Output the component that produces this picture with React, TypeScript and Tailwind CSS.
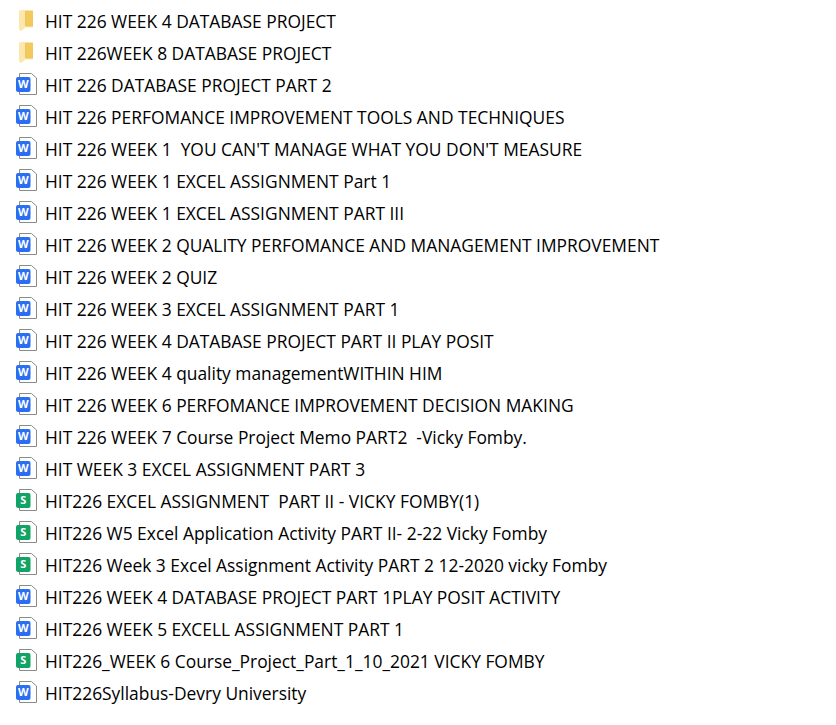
type Kind = "folder" | "word" | "sheet";

const files: { name: string; kind: Kind }[] = [
  { name: "HIT 226 WEEK 4 DATABASE PROJECT", kind: "folder" },
  { name: "HIT 226WEEK 8 DATABASE PROJECT", kind: "folder" },
  { name: "HIT 226 DATABASE PROJECT PART 2", kind: "word" },
  { name: "HIT 226 PERFOMANCE IMPROVEMENT TOOLS AND TECHNIQUES", kind: "word" },
  { name: "HIT 226 WEEK 1  YOU CAN'T MANAGE WHAT YOU DON'T MEASURE", kind: "word" },
  { name: "HIT 226 WEEK 1 EXCEL ASSIGNMENT Part 1", kind: "word" },
  { name: "HIT 226 WEEK 1 EXCEL ASSIGNMENT PART III", kind: "word" },
  { name: "HIT 226 WEEK 2 QUALITY PERFOMANCE AND MANAGEMENT IMPROVEMENT", kind: "word" },
  { name: "HIT 226 WEEK 2 QUIZ", kind: "word" },
  { name: "HIT 226 WEEK 3 EXCEL ASSIGNMENT PART 1", kind: "word" },
  { name: "HIT 226 WEEK 4 DATABASE PROJECT PART II PLAY POSIT", kind: "word" },
  { name: "HIT 226 WEEK 4 quality managementWITHIN HIM", kind: "word" },
  { name: "HIT 226 WEEK 6 PERFOMANCE IMPROVEMENT DECISION MAKING", kind: "word" },
  { name: "HIT 226 WEEK 7 Course Project Memo PART2  -Vicky Fomby.", kind: "word" },
  { name: "HIT WEEK 3 EXCEL ASSIGNMENT PART 3", kind: "word" },
  { name: "HIT226 EXCEL ASSIGNMENT  PART II - VICKY FOMBY(1)", kind: "sheet" },
  { name: "HIT226 W5 Excel Application Activity PART II- 2-22 Vicky Fomby", kind: "sheet" },
  { name: "HIT226 Week 3 Excel Assignment Activity PART 2 12-2020 vicky Fomby", kind: "sheet" },
  { name: "HIT226 WEEK 4 DATABASE PROJECT PART 1PLAY POSIT ACTIVITY", kind: "word" },
  { name: "HIT226 WEEK 5 EXCELL ASSIGNMENT PART 1", kind: "word" },
  { name: "HIT226_WEEK 6 Course_Project_Part_1_10_2021 VICKY FOMBY", kind: "sheet" },
  { name: "HIT226Syllabus-Devry University", kind: "word" },
];

function FolderIcon() {
  return (
    <svg width="22" height="22" viewBox="0 0 22 22" className="shrink-0 mb-[2px]">
      <path d="M5 1.5 H17 V17.5 H5 Z" fill="#f2c95c" />
      <path d="M3 1.5 H9.5 V17 H17 V18.5 H9.5 L5 22 L3 20.5 Z" fill="#fce8ab" />
      <path d="M9.5 2 V17 H17" fill="none" stroke="#e5b94e" strokeWidth="0.6" />
    </svg>
  );
}

function DocIcon({ letter, color }: { letter: string; color: string }) {
  return (
    <svg width="22" height="22" viewBox="0 0 22 22" className="shrink-0 mb-[2px]">
      <path
        d="M3.5 0.5 H15.5 L20.5 5 V21.5 H3.5 Z"
        fill="#fff"
        stroke="#8a8a8a"
        strokeWidth="1"
        strokeLinejoin="round"
      />
      <rect x="0" y="4" width="14.5" height="15" rx="2" fill={color} />
      <text
        x="7.25"
        y="15.4"
        textAnchor="middle"
        fontSize="11"
        fontWeight="700"
        fontFamily="'Open Sans', sans-serif"
        fill="#fff"
      >
        {letter}
      </text>
    </svg>
  );
}

function FileIcon({ kind }: { kind: Kind }) {
  if (kind === "folder") return <FolderIcon />;
  if (kind === "word") return <DocIcon letter="W" color="#2a6fef" />;
  return <DocIcon letter="S" color="#12a366" />;
}

export default function App() {
  return (
    <div className="w-[836px] h-[725px] overflow-hidden bg-white pt-[5px] pl-4 font-['Open_Sans',sans-serif] text-black">
      {files.map((file) => (
        <div key={file.name} className="flex items-center h-8 gap-[7px]">
          <FileIcon kind={file.kind} />
          <span className="whitespace-pre text-[17.4px] leading-8">{file.name}</span>
        </div>
      ))}
    </div>
  );
}
